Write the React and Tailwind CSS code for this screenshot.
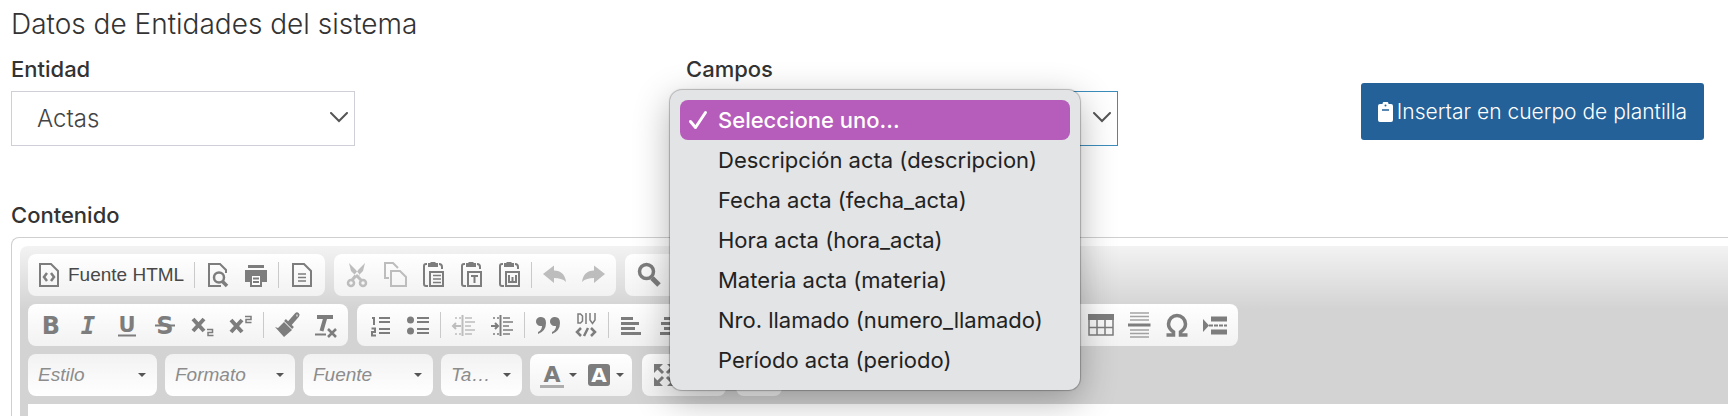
/*
  File: src/components/PlantillaEditor.jsx
  Purpose: Template form with entity fields and rich text toolbar
*/

import React from 'react';

const CAMPOS = [
  'Seleccione uno...',
  'Descripción acta (descripcion)',
  'Fecha acta (fecha_acta)',
  'Hora acta (hora_acta)',
  'Materia acta (materia)',
  'Nro. llamado (numero_llamado)',
  'Período acta (periodo)',
];

// Icon shapes, all drawn on a 28x28 box
const bold = { fontFamily: 'DejaVu Sans', fontWeight: 700, stroke: 'none', fill: 'currentColor' };
const page = 'M5 3h11l7 7v15H5z';
const board = (
  <>
    <path d="M8 3H7Q5 3 5 5v18q0 2 2 2h2M20 3q3 0 3 3v2" />
    <path d="M9 2h2l1-1h4l1 1h2v4H9z" fill="currentColor" stroke="none" />
    <path d="M11 11h13v14H11z" />
  </>
);
const undoPath = 'M2 13L13 4.500v5c7 0 11 4 12 11.500-3-3-7-4-12-4v5z';
const indentLines = (
  <>
    <path d="M12.500 4v21" />
    <path d="M15 7h7M15 11h10M15 15h6M15 19h10M15 23h7" strokeWidth="1.500" />
    <path d="M5 7h6M5 23h6" strokeDasharray="2 2" strokeWidth="1.500" />
  </>
);

const ICONS = {
  source: (
    <>
      <path d={page} />
      <path d="M12 12l-3 4 3 4M16 12l3 4-3 4" strokeWidth="2.500" />
    </>
  ),
  preview: (
    <>
      <path d="M17 25H5V3h11l6 6v3" />
      <circle cx="15" cy="16.500" r="5" strokeWidth="2.500" />
      <path d="M18 20l5 5" strokeWidth="3.500" />
    </>
  ),
  print: (
    <>
      <path d="M6 4h16v3H6z" fill="currentColor" stroke="none" />
      <path d="M3 9h22v12H3z" fill="currentColor" stroke="none" />
      <path d="M9 14h10v11H9z" fill="#fff" />
      <path d="M11 17.500h6M11 21h6" />
    </>
  ),
  template: (
    <>
      <path d={page} />
      <path d="M10 13h8M10 16.500h8M10 20h8" strokeWidth="1.500" />
    </>
  ),
  cut: (
    <>
      <path d="M6 2l2 8 6 6 3-2-5-6zM22 2l-2 8-10 10-2-2 8-10z" fill="currentColor" stroke="none" />
      <path d="M13 14l6 6" strokeWidth="3" />
      <circle cx="8" cy="22" r="3" strokeWidth="2.500" />
      <circle cx="20" cy="22" r="3" strokeWidth="2.500" />
    </>
  ),
  copy: (
    <>
      <path d="M8 17H4V2h8l5 5" />
      <path d="M10 10h9l6 6v9H10z" />
    </>
  ),
  paste: (
    <>
      {board}
      <path d="M14 14.500h8M14 18h8M14 21.500h8" strokeWidth="1.500" />
    </>
  ),
  pasteText: (
    <>
      {board}
      <path d="M14 15h7M17.500 15v7" />
    </>
  ),
  pasteWord: (
    <>
      {board}
      <path d="M14 14v7h3.500v-5M17.500 21H21v-7" />
    </>
  ),
  undo: <path d={undoPath} fill="currentColor" stroke="none" />,
  redo: <path d={undoPath} fill="currentColor" stroke="none" transform="translate(28 0) scale(-1 1)" />,
  find: (
    <>
      <circle cx="12.500" cy="10.500" r="7" strokeWidth="3.500" />
      <path d="M18 17l7 7" strokeWidth="5" />
    </>
  ),
  replace: <path d="M4 8h16l-4-4M24 20H8l4 4" strokeWidth="3" />,
  bold: <text x="14" y="23" fontSize="24" textAnchor="middle" style={bold}>B</text>,
  italic: (
    <text x="13" y="23" fontSize="24" textAnchor="middle" style={{ ...bold, fontFamily: 'DejaVu Sans Mono', fontStyle: 'italic' }}>I</text>
  ),
  underline: (
    <>
      <text x="14" y="21" fontSize="21" textAnchor="middle" style={bold}>U</text>
      <path d="M5 24.500h18" />
    </>
  ),
  strike: (
    <>
      <text x="14" y="23" fontSize="24" textAnchor="middle" style={bold}>S</text>
      <path d="M4 14.500h20" />
    </>
  ),
  sub: (
    <>
      <path d="M4 8l11 12M15 8L4 20" strokeWidth="4" />
      <path d="M18 18.500h5.500v3H19v3h5.500" strokeWidth="1.500" />
    </>
  ),
  sup: (
    <>
      <path d="M4 9l11 12M15 9L4 21" strokeWidth="4" />
      <path d="M18 5.500h6v3h-5v3h5.500" strokeWidth="1.500" />
    </>
  ),
  brush: (
    <>
      <path d="M2 16l3 1 6-6 8 8-8 7z" fill="currentColor" stroke="none" />
      <path d="M12 9l8 8" strokeWidth="2.500" />
      <path d="M17 12l7-8" strokeWidth="5" strokeLinecap="round" />
      <path d="M23.500 4.500h1" stroke="#fff" />
    </>
  ),
  removeFormat: (
    <>
      <path d="M6 6h16M14.500 6l-4 14" strokeWidth="4" />
      <path d="M4 23.500h11" />
      <path d="M17 18l8 8M25 18l-8 8" strokeWidth="2.500" />
    </>
  ),
  numbered: (
    <>
      <path d="M6 7h2v7M5.500 17.500H9V21H6v3.500h4" />
      <path d="M13 7h11M13 11h11M13 18h11M13 22h11" />
    </>
  ),
  bulleted: (
    <>
      <circle cx="6.500" cy="9" r="3.500" fill="currentColor" stroke="none" />
      <circle cx="6.500" cy="20" r="3.500" fill="currentColor" stroke="none" />
      <path d="M13 7h12M13 11h12M13 18h12M13 22h12" />
    </>
  ),
  outdent: (
    <>
      {indentLines}
      <path d="M11 15H3M6 12l-3 3 3 3" />
    </>
  ),
  indent: (
    <>
      {indentLines}
      <path d="M3 15h7M7 12l3 3-3 3" />
    </>
  ),
  quote: (
    <path
      d="M7 6a4.500 4.500 0 0 0-1 9h2q0 4-4 6v2q8-3 8-11 0-6-5-6zM21 6a4.500 4.500 0 0 0-1 9h2q0 4-4 6v2q8-3 8-11 0-6-5-6z"
      fill="currentColor"
      stroke="none"
    />
  ),
  div: (
    <>
      <path d="M6 3v9h2.500l2-2V5l-2-2zM14 2v11M18 2v7l2.500 3.500L23 9V2" strokeWidth="1.500" />
      <path d="M9 17l-4 4 4 4M19 17l4 4-4 4M16 17l-4 8" strokeWidth="2.500" />
    </>
  ),
  left: <path d="M3 7.500h12M3 12.500h18M3 17.500h14M3 22.500h20" strokeWidth="3" />,
  center: <path d="M8 7.500h12M5 12.500h18M8 17.500h12M4 22.500h20" strokeWidth="3" />,
  right: <path d="M11 7.500h13M6 12.500h18M11 17.500h13M4 22.500h20" strokeWidth="3" />,
  justify: <path d="M4 7.500h20M4 12.500h20M4 17.500h20M4 22.500h20" strokeWidth="3" />,
  image: <path d="M3 5h22v18H3zM5 20l6-7 5 5 3-3 5 5" />,
  link: <path d="M12 9H7a5 5 0 0 0 0 10h5M16 9h5a5 5 0 0 1 0 10h-5M9 14h10" />,
  anchor: <path d="M7 24V4h14l-4 5 4 5H7" />,
  table: (
    <>
      <path d="M1 3h26v6H1z" fill="currentColor" stroke="none" />
      <path d="M2 4v20h24V4M2 16.500h24M10 8v16M18 8v16" strokeWidth="1.500" />
    </>
  ),
  hr: (
    <>
      <path d="M5 2h19M5 5.500h19M5 9h19M5 19h19M5 22.500h19M5 26h19" strokeWidth="1.500" opacity="0.700" />
      <path d="M3 14h22.500" strokeWidth="3" />
    </>
  ),
  omega: (
    <path d="M3.500 24h7v-3C7 18.500 5.500 16 5.500 13a8.500 8.500 0 0 1 17 0c0 3-1.500 5.500-5 8v3h7" strokeWidth="3.500" />
  ),
  pagebreak: (
    <>
      <path d="M2 8l6 6.500L2 21z" fill="currentColor" stroke="none" />
      <path d="M10 8h16M10 21h16" strokeWidth="5" />
      <path d="M8 14.500h18" strokeDasharray="4 1" />
    </>
  ),
  color: (
    <>
      <text x="14" y="21" fontSize="22" textAnchor="middle" style={bold}>A</text>
      <path d="M2 25.500h24" strokeWidth="3" opacity="0.600" />
    </>
  ),
  bgcolor: (
    <>
      <rect x="3" y="3" width="22" height="22" rx="3" fill="currentColor" stroke="none" />
      <text x="14" y="21" fontSize="20" textAnchor="middle" style={{ ...bold, fill: '#fff' }}>A</text>
    </>
  ),
  maximize: (
    <>
      <path d="M3 3h9L3 12zM25 3v9l-9-9zM3 25v-9l9 9zM25 25h-9l9-9z" fill="currentColor" stroke="none" />
      <path d="M5 5l7 7M23 5l-7 7M5 23l7-7M23 23l-7-7" strokeWidth="3" />
    </>
  ),
  blocks: <path d="M4 5h20v18H4zM8 10h12M8 14h8" />,
  about: <path d="M14 3a11 11 0 1 0 .1 0zM14 12v8M14 8v2" />,
};

const Icon = ({ name }) => (
  <svg viewBox="0 0 28 28" className="w-7 h-7 shrink-0" fill="none" stroke="currentColor" strokeWidth="2" aria-hidden="true">
    {ICONS[name]}
  </svg>
);

const Caret = () => (
  <svg viewBox="0 0 8 4" className="w-2 h-1 shrink-0" aria-hidden="true">
    <path d="M0 0h8L4 4z" fill="#555" />
  </svg>
);

const Tool = ({ name, disabled }) => (
  <button
    type="button"
    aria-label={name}
    disabled={disabled}
    className={`w-[38px] h-full flex items-center justify-center ${disabled ? 'text-[#bdbdbd]' : 'text-[#7d7d7d]'}`}
  >
    <Icon name={name} />
  </button>
);

const Sep = () => <span className="w-px h-[26px] ml-[3px] mr-1 shrink-0 bg-[#cacaca]" />;

// items: icon names, '|' draws a separator, a leading '-' disables the tool
const Group = ({ items = [], children }) => (
  <div className="flex items-center h-[42px] shrink-0 px-1 rounded-lg bg-linear-to-b from-white to-[#f2f2f2]">
    {children}
    {items.map((item, i) =>
      item === '|' ? <Sep key={i} /> : <Tool key={i} name={item.replace('-', '')} disabled={item.startsWith('-')} />
    )}
  </div>
);

const Combo = ({ label, text, width }) => (
  <div className={`relative shrink-0 ${width}`}>
    <select
      aria-label={label}
      className="appearance-none block w-full h-[42px] pl-[10px] pr-6 rounded-lg bg-linear-to-b from-[#f2f2f2] to-white italic text-[19px] text-[#8c8c8c] outline-none"
    >
      <option>{text}</option>
    </select>
    <span className="absolute right-[11px] top-1/2 -translate-y-1/2 flex pointer-events-none">
      <Caret />
    </span>
  </div>
);

const ColorTool = ({ name }) => (
  <button type="button" aria-label={name} className="w-[47px] h-full flex items-center justify-center gap-[3px] text-[#7d7d7d]">
    <Icon name={name} />
    <Caret />
  </button>
);

const Field = ({ id, value, width, border, children }) => (
  <div className={`relative mt-[10px] ${width}`}>
    <select
      id={id}
      className={`appearance-none block w-full h-[55px] pl-[25px] pr-10 bg-white border text-[24px] font-light text-[#444] outline-none ${border}`}
    >
      <option>{value}</option>
    </select>
    <svg viewBox="0 0 18 11" className="absolute right-[7px] top-[21px] w-[18px] h-[11px] pointer-events-none" fill="none" stroke="#555" strokeWidth="2" strokeLinecap="round" aria-hidden="true">
      <path d="M1 1l8 8 8-8" />
    </svg>
    {children}
  </div>
);

const CamposMenu = () => (
  <ul
    role="listbox"
    aria-label="Campos"
    className="absolute -left-4 -top-px z-10 w-[410px] p-[10px] rounded-xl bg-[#e2e4e6] text-[22px] text-[#222] shadow-[0_0_1px_1px_rgba(0,0,0,0.25),0_10px_36px_rgba(0,0,0,0.3)]"
  >
    {CAMPOS.map((campo, i) => (
      <li
        key={campo}
        role="option"
        aria-selected={i === 0}
        className={`flex items-center h-10 pl-2 rounded-lg whitespace-nowrap ${i === 0 ? 'bg-[#b65cba] text-white font-medium' : ''}`}
      >
        <span className="w-[30px] shrink-0">
          {i === 0 && (
            <svg viewBox="0 0 20 20" className="w-5 h-5" fill="none" stroke="currentColor" strokeWidth="3" strokeLinecap="round" strokeLinejoin="round" aria-hidden="true">
              <path d="M2.500 11.500l5 6L17.500 2.500" />
            </svg>
          )}
        </span>
        {campo}
      </li>
    ))}
  </ul>
);

const labelClass = 'block text-[22px] leading-6 font-medium text-[#333]';

const App = () => (
  <main className="min-h-screen overflow-hidden bg-white pt-2 pl-[11px] font-['Inter',sans-serif]">
    <h2 className="text-[28px] leading-8 font-light text-[#333]">Datos de Entidades del sistema</h2>

    <div className="mt-[17px] grid grid-cols-[675fr_675fr_367fr]">
      <div>
        <label htmlFor="entidad" className={labelClass}>Entidad</label>
        <Field id="entidad" value="Actas" width="w-[51%]" border="border-[#cfcfd8]" />
      </div>
      <div>
        <label htmlFor="campos" className={labelClass}>Campos</label>
        <Field id="campos" value="Seleccione uno..." width="w-[64%]" border="border-[#3c8dbc]">
          <CamposMenu />
        </Field>
      </div>
      <div className="pt-[26px] pr-6">
        <button type="button" className="w-full h-[57px] flex items-center justify-center gap-1 rounded-[3px] bg-[#246198] text-white text-[21px] font-light whitespace-nowrap">
          <svg viewBox="0 0 15 20" className="w-[15px] h-5 shrink-0" aria-hidden="true">
            <path d="M2 2h2.500a3 2.500 0 0 1 6 0H13a2 2 0 0 1 2 2v14a2 2 0 0 1-2 2H2a2 2 0 0 1-2-2V4a2 2 0 0 1 2-2z" fill="#fff" />
            <circle cx="7.500" cy="3.500" r="1" fill="#246198" />
            <path d="M4 8h7" stroke="#246198" strokeWidth="1.500" />
          </svg>
          Insertar en cuerpo de plantilla
        </button>
      </div>
    </div>

    {/* Rich text editor */}
    <label htmlFor="contenido" className={`${labelClass} mt-[57px]`}>Contenido</label>
    <div className="mt-[10px] pt-2 pl-2 border-t border-l border-[#cfcfcf] rounded-tl-lg font-['Liberation_Sans',sans-serif]">
      <div className="pt-2 pl-2 rounded-tl-lg bg-[#d3d3d3] bg-linear-to-b from-[#f3f3f3] to-[#d3d3d3] to-[64px]">
        <div className="flex flex-col gap-2 pb-2">
          <div className="flex gap-[9px]">
            <Group items={['|', 'preview', 'print', '|', 'template']}>
              <button type="button" className="h-full pl-[3px] pr-[7px] flex items-center gap-[5px] text-[19px] text-[#484848] whitespace-nowrap">
                <span className="flex text-[#7d7d7d]"><Icon name="source" /></span>
                Fuente HTML
              </button>
            </Group>
            <Group items={['-cut', '-copy', 'paste', 'pasteText', 'pasteWord', '|', '-undo', '-redo']} />
            <Group items={['find', 'replace', '|', 'justify']} />
          </div>
          <div className="flex gap-[9px]">
            <Group items={['bold', 'italic', 'underline', 'strike', 'sub', 'sup', '|', 'brush', 'removeFormat']} />
            <Group items={['numbered', 'bulleted', '|', '-outdent', 'indent', '|', 'quote', 'div', '|', 'left', 'center', 'right', 'justify']} />
            <Group items={['replace', 'about']} />
            <Group items={['link', 'link', 'anchor']} />
            <Group items={['image', 'blocks', 'table', 'hr', 'omega', 'pagebreak']} />
          </div>
          <div className="flex gap-2">
            <Combo label="Estilo" text="Estilo" width="w-[129px]" />
            <Combo label="Formato" text="Formato" width="w-[130px]" />
            <Combo label="Fuente" text="Fuente" width="w-[130px]" />
            <Combo label="Tamaño" text="Ta…" width="w-[81px]" />
            <div className="flex gap-[10px]">
              <Group>
                <ColorTool name="color" />
                <ColorTool name="bgcolor" />
              </Group>
              <Group items={['maximize', 'blocks']} />
              <Group items={['about']} />
            </div>
          </div>
        </div>
        <textarea id="contenido" className="block w-full h-8 resize-none bg-white outline-none" />
      </div>
    </div>
  </main>
);

export default App;
